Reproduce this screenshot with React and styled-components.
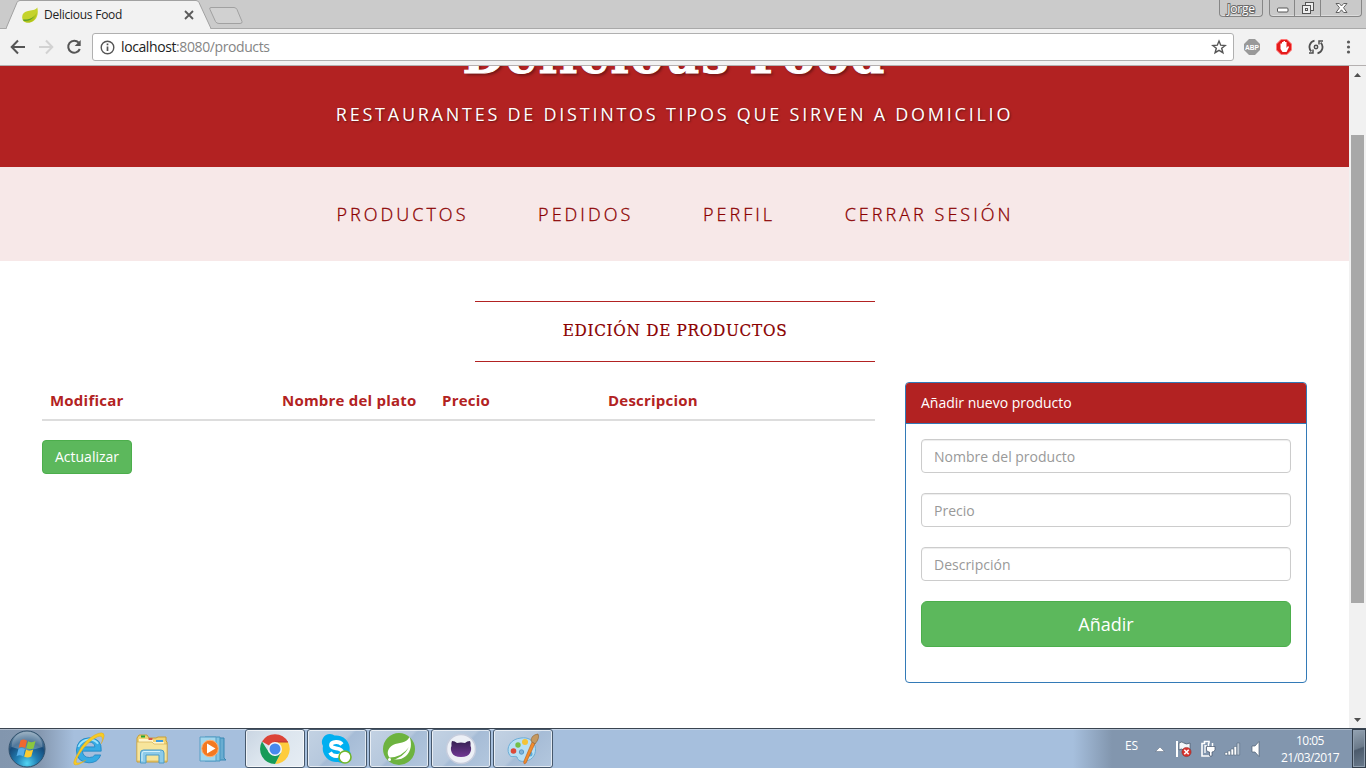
import React from "react";
import styled, { createGlobalStyle, css } from "styled-components";

const Global = createGlobalStyle`
  *, *::before, *::after { box-sizing: border-box; }
  html, body { margin: 0; padding: 0; background: #fff; overflow: hidden; }
  body { font-family: "Open Sans", sans-serif; font-size: 14px; line-height: 20px; color: #333; }
  svg { display: block; }
`;

const Screen = styled.div`
  width: 1366px;
  height: 768px;
  display: flex;
  flex-direction: column;
  overflow: hidden;
`;

/* ---------- browser ---------- */
const TabStrip = styled.header`
  height: 29px;
  flex: none;
  display: flex;
  align-items: flex-start;
  background: #cbcbcb;
  border-bottom: 1px solid #a9a9a9;
`;
const Tab = styled.div`
  position: relative;
  width: 206px;
  height: 29px;
  margin-left: 6px;
  padding: 1px 18px 0 16px;
  display: flex;
  align-items: center;
  gap: 6px;
`;
const TabShape = styled.svg`
  position: absolute;
  left: 0;
  top: 0;
`;
const TabIcon = styled.svg`
  position: relative;
  flex: none;
`;
const TabTitle = styled.span`
  position: relative;
  flex: 1;
  font: 12px/16px "Open Sans", sans-serif;
  letter-spacing: -0.25px;
  color: #222;
  white-space: nowrap;
`;
const NewTab = styled.svg`
  margin: 6px 0 0 -4px;
`;
const WindowControls = styled.div`
  margin-left: auto;
  display: flex;
  align-items: flex-start;
  gap: 6px;
`;
const controlBox = css`
  height: 17px;
  border: 1px solid #868686;
  border-top: 0;
  border-radius: 0 0 4px 4px;
  background: #c9c9c9;
  box-shadow: inset 0 -1px 0 #dcdcdc;
`;
const UserButton = styled.div`
  ${controlBox}
  width: 44px;
  text-align: center;
  font: 12px/18px "Open Sans", sans-serif;
  letter-spacing: -0.2px;
  color: #fff;
  -webkit-text-stroke: 2px #6a6a6a;
  paint-order: stroke fill;
`;
const ButtonGroup = styled.div`
  ${controlBox}
  display: flex;
  width: 93px;
  margin-right: 4px;
`;
const ControlButton = styled.div`
  width: ${(p) => p.$w}px;
  display: flex;
  justify-content: center;
  align-items: center;
  & + & { border-left: 1px solid #868686; }
`;
const Toolbar = styled.div`
  height: 37px;
  flex: none;
  display: flex;
  align-items: center;
  padding: 0 9px 0 10px;
  background: #f2f2f2;
  border-bottom: 1px solid #b4b0b0;
`;
const NavButtons = styled.div`
  display: flex;
  gap: 12px;
  width: 82px;
`;
const AddressBar = styled.div`
  width: 1142px;
  height: 28px;
  display: flex;
  align-items: center;
  padding: 0 6px 0 7px;
  gap: 6px;
  background: #fff;
  border: 1px solid #b0b0b0;
  border-radius: 3px;
`;
const Url = styled.span`
  flex: 1;
  font: 14px/20px "Open Sans", sans-serif;
  letter-spacing: -0.4px;
  color: #222;
  span { color: #858585; }
`;
const Extensions = styled.div`
  margin-left: 10px;
  display: flex;
  gap: 16px;
  align-items: center;
`;
const MenuIcon = styled.svg`
  margin-left: auto;
`;

/* ---------- page ---------- */
const Viewport = styled.div`
  height: 662px;
  flex: none;
  display: flex;
`;
const Page = styled.main`
  width: 1349px;
  height: 662px;
  overflow: hidden;
  background: #fff;
`;
const Hero = styled.section`
  height: 101px;
  background: #b22222;
  display: flex;
  flex-direction: column;
  justify-content: flex-end;
  align-items: center;
  padding-bottom: 40px;
  color: #fff;
  overflow: hidden;
`;
const Title = styled.h1`
  flex: none;
  margin: 0 0 5px;
  height: 80px;
  font: bold 48px/80px "DejaVu Serif", serif;
  white-space: nowrap;
  letter-spacing: 2px;
  -webkit-text-stroke: 1px #fff;
  text-shadow: 2px 2px 3px rgba(0, 0, 0, 0.4);
`;
const Subtitle = styled.p`
  flex: none;
  margin: 0;
  font-size: 18px;
  line-height: 26px;
  letter-spacing: 2.75px;
  text-shadow: 1px 1px 2px rgba(0, 0, 0, 0.45);
  white-space: nowrap;
`;
const Menu = styled.nav`
  height: 94px;
  background: #f7e8e8;
  display: flex;
  justify-content: center;
  align-items: center;
  gap: 69.6px;
  padding-left: 1px;
`;
const MenuLink = styled.a`
  font-size: 18px;
  line-height: 26px;
  font-weight: 300;
  letter-spacing: 3.03px;
  color: #8b0000;
  -webkit-text-stroke: 0.3px #8b0000;
  white-space: nowrap;
`;
const SectionHeading = styled.h2`
  width: 400px;
  height: 61px;
  margin: 40px 0 0 475px;
  border: solid #b22222;
  border-width: 1px 0;
  font: 17px/56px "DejaVu Serif", serif;
  font-stretch: condensed;
  text-align: center;
  letter-spacing: 0.7px;
  color: #8b0000;
  -webkit-text-stroke: 0.2px #8b0000;
  white-space: nowrap;
`;
const Columns = styled.div`
  margin-top: 20px;
  padding-left: 42px;
  display: flex;
  align-items: flex-start;
  gap: 30px;
`;
const TableArea = styled.section`
  width: 833px;
`;
const HeaderRow = styled.div`
  display: grid;
  grid-template-columns: 232px 160px 166px 1fr;
  height: 39px;
  border-bottom: 2px solid #ddd;
  margin-bottom: 19px;
`;
const HeaderCell = styled.div`
  padding: 7px 8px 0;
  font-weight: 700;
  font-size: 15px;
  line-height: 22px;
  letter-spacing: 0.22px;
  color: #b22222;
  white-space: nowrap;
`;
const Button = styled.button`
  display: block;
  width: ${(p) => (p.$large ? "100%" : "90px")};
  height: ${(p) => (p.$large ? 46 : 34)}px;
  padding: 0 0 ${(p) => (p.$large ? 0 : 1)}px;
  border: 1px solid #4cae4c;
  border-radius: ${(p) => (p.$large ? 6 : 4)}px;
  background: #5cb85c;
  color: #fff;
  font-family: "Open Sans", sans-serif;
  font-size: ${(p) => (p.$large ? 18 : 14)}px;
`;
const Panel = styled.section`
  width: 402px;
  height: 301px;
  border: 1px solid #337ab7;
  border-radius: 4px;
  overflow: hidden;
`;
const PanelHeading = styled.div`
  height: 41px;
  padding: 10px 15px;
  background: #b22222;
  border-bottom: 1px solid #337ab7;
  color: #fff;
`;
const Form = styled.form`
  padding: 15px;
  display: flex;
  flex-direction: column;
  gap: 20px;
`;
const Input = styled.input`
  width: 100%;
  height: 34px;
  padding: 6px 12px;
  border: 1px solid #ccc;
  border-radius: 4px;
  box-shadow: inset 0 1px 1px rgba(0, 0, 0, 0.075);
  font: 14px/20px "Open Sans", sans-serif;
  &::placeholder { color: #999; opacity: 1; }
`;
const Scrollbar = styled.div`
  width: 17px;
  height: 662px;
  background: #f1f1f1;
  display: flex;
  flex-direction: column;
  align-items: center;
`;
const Thumb = styled.div`
  width: 13px;
  height: 468px;
  margin: 52px 0 auto;
  background: #a8a8a8;
`;
const ArrowBox = styled.div`
  width: 17px;
  height: 17px;
  display: flex;
  align-items: center;
  justify-content: center;
`;

/* ---------- taskbar ---------- */
const Taskbar = styled.footer`
  height: 40px;
  flex: none;
  display: flex;
  align-items: stretch;
  border-top: 1px solid #3a4450;
  background: linear-gradient(90deg, #8296ae 0, #8598b0 40px, #a6bfdd 74px, #a6bfdd 1073px, #8296ae 1112px, #8296ae 100%);
  box-shadow: inset 0 1px 0 rgba(255, 255, 255, 0.35);
`;
const Pinned = styled.div`
  width: 245px;
  display: flex;
  align-items: center;
`;
const PinnedIcon = styled.div`
  width: ${(p) => p.$w}px;
  display: flex;
  justify-content: center;
`;
const Running = styled.div`
  display: flex;
  gap: 2px;
`;
const TaskButton = styled.div`
  width: 60px;
  height: 39px;
  display: flex;
  align-items: center;
  justify-content: center;
  border: 1px solid #46586c;
  border-radius: 3px;
  box-shadow: inset 0 0 0 1px rgba(255, 255, 255, 0.65);
  background: ${(p) =>
    p.$active
      ? "linear-gradient(135deg, #c9d5e2 0, #dce5ee 45%, #e6edf4 100%)"
      : "linear-gradient(135deg, #c3d2e3 0, #b6c8dd 48%, #a6bcd6 52%, #b3c7de 100%)"};
`;
const Tray = styled.div`
  margin-left: auto;
  display: flex;
  align-items: center;
  color: #fff;
  font: 12px/17px "Open Sans", sans-serif;
`;
const Language = styled.span`
  width: 28px;
  margin-bottom: 6px;
  letter-spacing: -0.2px;
`;
const TrayIcons = styled.div`
  display: flex;
  align-items: center;
  gap: 8px;
`;
const Clock = styled.div`
  width: 60px;
  margin: 1px 12px 0 17px;
  text-align: center;
  letter-spacing: -0.55px;
  white-space: nowrap;
`;
const ShowDesktop = styled.div`
  width: 14px;
  height: 39px;
  border: 1px solid #333f4c;
  box-shadow: inset 0 0 0 1px #91a0b0;
  background: linear-gradient(160deg, #94a3b2 0, #6b7a8a 48%, #4c5b6c 52%, #697a8c 100%);
`;

const Leaf = () => (
  <TabIcon width="16" height="16" viewBox="0 0 16 16">
    <path d="M15.3.6C13 3.500 9.500 3.300 6 4C2.200 4.800-.1 7 .2 10.700C.3 13.500 2 15.500 5.500 15.600C12 16 17.500 10 15.300.6Z" fill="#c4d32b" />
    <path d="M1.500 12.700C8 12.700 12 10 14.700 5.400C14.500 10 12 14 7.500 15.400C4.500 15.800 2.500 15 1.500 12.700Z" fill="#b0c31b" />
    <path d="M1 12.600C6 12.800 10 11.500 12.600 9C10.500 12.500 6 14.500 1.700 14Z" fill="#5da02b" />
  </TabIcon>
);

const StartOrb = () => (
  <svg width="38" height="38" viewBox="0 0 38 38">
    <defs>
      <radialGradient id="orb" cx=".5" cy=".9" r=".85">
        <stop offset="0" stopColor="#52d5f3" /><stop offset=".35" stopColor="#217fb4" />
        <stop offset=".7" stopColor="#174b7a" /><stop offset="1" stopColor="#7291aa" />
      </radialGradient>
    </defs>
    <circle cx="19" cy="19" r="18" fill="url(#orb)" stroke="#31516c" />
    <path d="M3.500 17A15.500 15.500 0 0 1 34.500 17Q19 23 3.500 17Z" fill="#fff" opacity=".25" />
    <path d="M12.500 10.500Q15.500 8.500 19 10.800L17.200 18Q13.500 16 10.600 18Z" fill="#ef6830" />
    <path d="M20 11.200Q24 13.200 27.500 11L25.600 18.200Q22.300 20 18.300 18.300Z" fill="#8ac63f" />
    <path d="M10.400 19Q13.500 17 17 19.200L15.200 26.400Q11.700 24.300 8.500 26.300Z" fill="#56aee8" />
    <path d="M18 19.500Q21.500 21.300 25.200 19.400L23.300 26.600Q19.700 28.500 16.200 26.800Z" fill="#fccb30" />
  </svg>
);

const Explorer = () => (
  <svg width="34" height="34" viewBox="0 0 32 32">
    <path d="M27.500 18H9.800Q10.500 24 16.500 24Q20 24 21.500 21.600H27Q24.500 29 16 29Q4 28.500 4.200 17Q5 6 16 5.500Q28.500 5.800 27.500 18ZM10 14H21.500Q21 9.500 16 9.500Q11 9.600 10 14Z" fill="#36abe4" stroke="#1980bd" strokeWidth=".7" />
    <path d="M6 14Q9 7.500 16 7Q22 7 24.500 11" fill="none" stroke="#9be2fb" strokeWidth="1.800" />
    <path d="M5 21Q-1 31 3.500 31Q7 31 13 26.500Q5 30.500 4 28.500Q3.500 26 7.500 20Q14.500 9 24 4.500Q29 2.500 28.500 7.500Q28.500 8.600 27.500 11Q33 1 27.500.8Q22 1 13 9Q8 14 5 21Z" fill="#f7cb25" stroke="#dba41b" strokeWidth=".4" />
  </svg>
);

const Folder = () => (
  <svg width="34" height="32" viewBox="0 0 34 32">
    <path d="M2 5L4 2H12L14 5H21L23 4H31V8L32 9V29H2Z" fill="#f1d574" stroke="#c89e37" />
    <path d="M4 6H18V9H29V12H4Z" fill="#fff6ce" />
    <path d="M6 2.500h4v2H6z" fill="#20a636" /><path d="M13.500 5h4v2h-4z" fill="#d85545" /><path d="M21 7h7v2h-7z" fill="#3c9ce0" />
    <path d="M2 9H17L19 11H32V28H2Z" fill="#f7e59b" stroke="#d3b053" strokeWidth=".7" />
    <path d="M5.500 30V20Q5.500 17 8.500 17H26Q29 17 29 20V30H24V22H11V30Z" fill="#8dcbe9" stroke="#4b9bc7" />
    <path d="M7 28V21Q7 18.500 9 18.500H25" fill="none" stroke="#d5f2fc" />
  </svg>
);

const MediaPlayer = () => (
  <svg width="32" height="30" viewBox="0 0 32 30">
    <path d="M13 4H27V24L29 26H13Z" fill="#69add1" stroke="#3987b3" />
    <path d="M8 3H23V27H8Z" fill="#84c5e2" stroke="#4796bf" />
    <path d="M3 3H19V27H3Z" fill="#a2d7ed" stroke="#599ec5" />
    <circle cx="13" cy="14.500" r="8.300" fill="#f47920" stroke="#ffb173" />
    <path d="M10 9.500L18.500 14.500L10 19.500Z" fill="#fff" />
  </svg>
);

const ChromeLogo = () => (
  <svg width="30" height="30" viewBox="0 0 30 30">
    <path d="M15 15L2 7.600A15 15 0 0 1 28 8H15Z" fill="#dc4438" />
    <path d="M15 8H28A15 15 0 0 1 15 30L21 18.500Z" fill="#fecc3d" />
    <path d="M2 7.600L9 18.500L15 22L21 18.500L15 30A15 15 0 0 1 2 7.600Z" fill="#169b58" />
    <path d="M15 8H28" stroke="#b9372e" />
    <circle cx="15" cy="15" r="7" fill="#f1f4f8" /><circle cx="15" cy="15" r="5.500" fill="#4789ed" />
  </svg>
);

const Skype = () => (
  <svg width="32" height="32" viewBox="0 0 32 32">
    <path d="M9 1A8 8 0 0 0 2 13A13.500 13.500 0 0 0 17 29Q27 33 30 23Q30 20 28.500 18A13.500 13.500 0 0 0 13.500 2.500Q12 1 9 1Z" fill="#00aff0" />
    <path d="M21 11.500Q19 8.800 15 9Q10 9.300 10 12.300C10 17 21 13.500 21 19Q21 23 15.500 23Q11 23 9 19.500" fill="none" stroke="#fff" strokeWidth="3.800" />
    <circle cx="24" cy="24" r="6" fill="#fff" stroke="#72b629" strokeWidth="1.600" />
  </svg>
);

const Spring = () => (
  <svg width="34" height="34" viewBox="0 0 34 34">
    <circle cx="17" cy="17" r="16" fill="#6db33f" />
    <path d="M27.500 5C24 12 17 10 11 13C5.500 16 4 22 8 26C12 28 19 28.500 24 24C29.500 19 30 11 27.500 5Z" fill="#fff" />
    <path d="M8 25.500Q20 25 27 15Q21 26.500 9 28Z" fill="#6db33f" /><circle cx="7.500" cy="27.500" r="1.500" fill="#fff" />
  </svg>
);

const GitHubLogo = () => (
  <svg width="32" height="32" viewBox="0 0 32 32">
    <defs><linearGradient id="cat" x2="0" y2="1"><stop stopColor="#352052" /><stop offset="1" stopColor="#713894" /></linearGradient></defs>
    <circle cx="16" cy="16" r="14.500" fill="#edf0f6" stroke="#c6cddd" strokeWidth="1.500" />
    <path d="M7 8Q10 8 12 10Q16 9 20 10Q22 8 25 8Q26 10 25.500 13Q27 16 25 20Q23 24 16 24Q9 24 7 20Q5 16 6.500 13Q6 10 7 8Z" fill="url(#cat)" />
  </svg>
);

const Paint = () => (
  <svg width="34" height="32" viewBox="0 0 34 32">
    <path d="M15 5C4 6 0 15 3 21C5 26 9 22 11 24C12 28 15 29 20 28C27 27 31 20 29 13C27 7 22 4 15 5Z" fill="#b8dff4" stroke="#6caed7" />
    <circle cx="7.500" cy="18" r="2.800" fill="#dc4939" /><circle cx="12" cy="12" r="2.700" fill="#74bf48" /><circle cx="19" cy="9" r="3" fill="#f4c337" /><circle cx="15.500" cy="19" r="2.200" fill="#7fb3d8" stroke="#5998c4" /><circle cx="24" cy="21" r="2.500" fill="#5aabd7" />
    <path d="M26 9L29 10.500L20 30Q17 32 18 28Z" fill="#f28c2c" stroke="#b75a19" strokeWidth=".6" />
    <path d="M25 8Q25 2 32 1Q34 5 29 11Z" fill="#c59961" stroke="#90622e" strokeWidth=".6" />
  </svg>
);

const tasks = [ChromeLogo, Skype, Spring, GitHubLogo, Paint];
const menuItems = ["PRODUCTOS", "PEDIDOS", "PERFIL", "CERRAR SESIÓN"];
const headers = ["Modificar", "Nombre del plato", "Precio", "Descripcion"];
const fields = ["Nombre del producto", "Precio", "Descripción"];

const ScrollArrow = ({ down }) => (
  <ArrowBox>
    <svg width="7" height="4" viewBox="0 0 7 4"><path d={down ? "M0 0H7L3.500 4Z" : "M0 4H7L3.500 0Z"} fill="#505050" /></svg>
  </ArrowBox>
);

const Browser = () => (
  <>
    <TabStrip>
      <Tab>
        <TabShape width="206" height="29">
          <path d="M0 28.500L11 2.500Q12 .5 14 .5H190Q192 .5 193 2.500L205 28.500" fill="#f2f2f2" stroke="#a1a1a1" />
          <path d="M1 28.500H204" stroke="#f2f2f2" />
        </TabShape>
        <Leaf />
        <TabTitle>Delicious Food</TabTitle>
        <TabIcon width="10" height="10"><path d="M1 1L9 9M9 1L1 9" stroke="#5a5a5a" strokeWidth="1.800" /></TabIcon>
      </Tab>
      <NewTab width="36" height="19"><path d="M3 1.500H26Q28 1.500 29 3.500L34 15.500Q34.500 17.500 32 17.500H11Q8.500 17.500 7.500 15.500L2 3.500Q1 1.500 3 1.500Z" fill="#d1d1d1" stroke="#a1a1a1" /></NewTab>
      <WindowControls>
        <UserButton>Jorge</UserButton>
        <ButtonGroup>
          <ControlButton $w={24}><svg width="13" height="16"><rect x="1.500" y="8" width="10.500" height="4" rx="1" fill="#fff" stroke="#555" /></svg></ControlButton>
          <ControlButton $w={26}><svg width="14" height="14" fill="#eee" stroke="#555"><rect x="4.500" y="1.500" width="8" height="8" /><rect x="1.500" y="4.500" width="8" height="8" /><rect x="4.500" y="7.500" width="2" height="2" /></svg></ControlButton>
          <ControlButton $w={41}><svg width="13" height="12"><path d="M1 1.500H4.300L6.500 4L8.700 1.500H12L8.500 5.700L12 10.500H8.700L6.500 7.800L4.300 10.500H1L4.500 5.700Z" fill="#fff" stroke="#555" strokeWidth=".9" /></svg></ControlButton>
        </ButtonGroup>
      </WindowControls>
    </TabStrip>
    <Toolbar>
      <NavButtons>
        <svg width="16" height="16" fill="none" stroke="#555" strokeWidth="2"><path d="M15 8H2M8 1.500L1.700 8L8 14.500" /></svg>
        <svg width="16" height="16" fill="none" stroke="#d2d2d2" strokeWidth="2"><path d="M1 8H14M8 1.500L14.300 8L8 14.500" /></svg>
        <svg width="16" height="16" fill="none" stroke="#555" strokeWidth="2"><path d="M12.700 3.700A6 6 0 1 0 13.800 10" /><path d="M14.700 1V7H8.700Z" fill="#555" stroke="none" /></svg>
      </NavButtons>
      <AddressBar>
        <svg width="15" height="15" fill="none" stroke="#555"><circle cx="7.500" cy="7.500" r="6.300" strokeWidth="1.400" /><path d="M7.500 6.500V11M7.500 3.500V5.200" strokeWidth="1.700" /></svg>
        <Url>localhost<span>:8080/products</span></Url>
        <svg width="16" height="16" fill="none" stroke="#555" strokeWidth="1.400"><path d="M8 2L9.700 6.200L14.300 6.500L10.700 9.300L11.900 13.700L8 11.300L4.100 13.700L5.300 9.300L1.700 6.500L6.300 6.200Z" /></svg>
      </AddressBar>
      <Extensions>
        <svg width="16" height="16"><path d="M5 0H11L16 5V11L11 16H5L0 11V5Z" fill="#999" /><text x="8" y="10.800" textAnchor="middle" fontFamily="Liberation Sans, sans-serif" fontWeight="700" fontSize="7.500" textLength="14" lengthAdjust="spacingAndGlyphs" fill="#fff">ABP</text></svg>
        <svg width="16" height="16"><path d="M5 .5H11L15.500 5V11L11 15.500H5L.5 11V5Z" fill="#e41b1b" stroke="#ff7777" /><path d="M4.500 8V4.500H6V7V3H7.500V7V2H9V7V3H10.500V9L12 7L13 8L10.500 13H6.500L4.500 10Z" fill="#fff" /></svg>
        <svg width="16" height="16" fill="none" stroke="#505050" strokeWidth="1.800">
          <path d="M6.500 1.700A6.400 6.400 0 0 0 3.300 12.400M9.500 14.300A6.400 6.400 0 0 0 12.700 3.600" />
          <path d="M1 14H5V10.500M15 2H11V5.500" strokeWidth="1.500" />
          <circle cx="8" cy="8" r="1.700" strokeWidth="1.500" />
        </svg>
      </Extensions>
      <MenuIcon width="16" height="16" fill="#5a5a5a"><circle cx="7.500" cy="3" r="1.600" /><circle cx="7.500" cy="8" r="1.600" /><circle cx="7.500" cy="13" r="1.600" /></MenuIcon>
    </Toolbar>
  </>
);

const ProductPage = () => (
  <Viewport>
    <Page>
      <Hero>
        <Title>Delicious Food</Title>
        <Subtitle>RESTAURANTES DE DISTINTOS TIPOS QUE SIRVEN A DOMICILIO</Subtitle>
      </Hero>
      <Menu>{menuItems.map((item) => <MenuLink key={item}>{item}</MenuLink>)}</Menu>
      <SectionHeading>EDICIÓN DE PRODUCTOS</SectionHeading>
      <Columns>
        <TableArea>
          <HeaderRow>{headers.map((label) => <HeaderCell key={label}>{label}</HeaderCell>)}</HeaderRow>
          <Button type="button">Actualizar</Button>
        </TableArea>
        <Panel>
          <PanelHeading>Añadir nuevo producto</PanelHeading>
          <Form>
            {fields.map((field) => <Input key={field} placeholder={field} />)}
            <Button $large type="button">Añadir</Button>
          </Form>
        </Panel>
      </Columns>
    </Page>
    <Scrollbar><ScrollArrow /><Thumb /><ScrollArrow down /></Scrollbar>
  </Viewport>
);

const Desktop = () => (
  <Taskbar>
    <Pinned>
      <PinnedIcon $w={54}><StartOrb /></PinnedIcon>
      <PinnedIcon $w={70}><Explorer /></PinnedIcon>
      <PinnedIcon $w={56}><Folder /></PinnedIcon>
      <PinnedIcon $w={65}><MediaPlayer /></PinnedIcon>
    </Pinned>
    <Running>{tasks.map((Icon, i) => <TaskButton key={i} $active={i === 0}><Icon /></TaskButton>)}</Running>
    <Tray>
      <Language>ES</Language>
      <TrayIcons>
        <svg width="14" height="16"><path d="M2.500 10.500L7 6L11.500 10.500Z" fill="#fff" stroke="#58677a" strokeWidth=".5" /></svg>
        <svg width="17" height="18"><path d="M2 1V17" stroke="#fff" strokeWidth="2" /><path d="M4 3Q7 1 9 3T15 3V10Q12 12 9 10T4 10Z" fill="#f4f7fa" stroke="#455364" strokeWidth=".7" /><circle cx="11.500" cy="12" r="4.600" fill="#d9322d" stroke="#892720" strokeWidth=".5" /><path d="M9.300 9.800L13.700 14.200M13.700 9.800L9.300 14.200" stroke="#fff" strokeWidth="1.600" /></svg>
        <svg width="16" height="18"><path d="M9 3.500V1.500H4.500V3.500H2V16H10" fill="none" stroke="#fff" strokeWidth="1.600" /><path d="M5 6H7M5 5V13" fill="none" stroke="#fff" strokeWidth="1.300" /><path d="M8.500 3V7M12.500 3V7" stroke="#fff" strokeWidth="1.500" /><path d="M6.500 6.500H15V10Q14 12 12 12V16H9.500V12Q7 12 6.500 10Z" fill="#fff" stroke="#45556a" strokeWidth=".7" /></svg>
        <svg width="17" height="18" fill="#fff" stroke="#4f6074" strokeWidth=".5"><path d="M1 12.500h2.700V15H1zM4 11h2.700v4H4zM7 9h2.700v6H7zM10 6.500h2.700V15H10z" /><path d="M13 3h2.700v12H13z" fill="#b9c5d2" /></svg>
        <svg width="14" height="18"><path d="M3 6H6L10 1.500V16.500L6 12H3Z" fill="#fff" stroke="#4f6074" strokeWidth=".7" /></svg>
      </TrayIcons>
      <Clock><div>10:05</div><div>21/03/2017</div></Clock>
      <ShowDesktop />
    </Tray>
  </Taskbar>
);

export default function App() {
  return <><Global /><Screen><Browser /><ProductPage /><Desktop /></Screen></>;
}
